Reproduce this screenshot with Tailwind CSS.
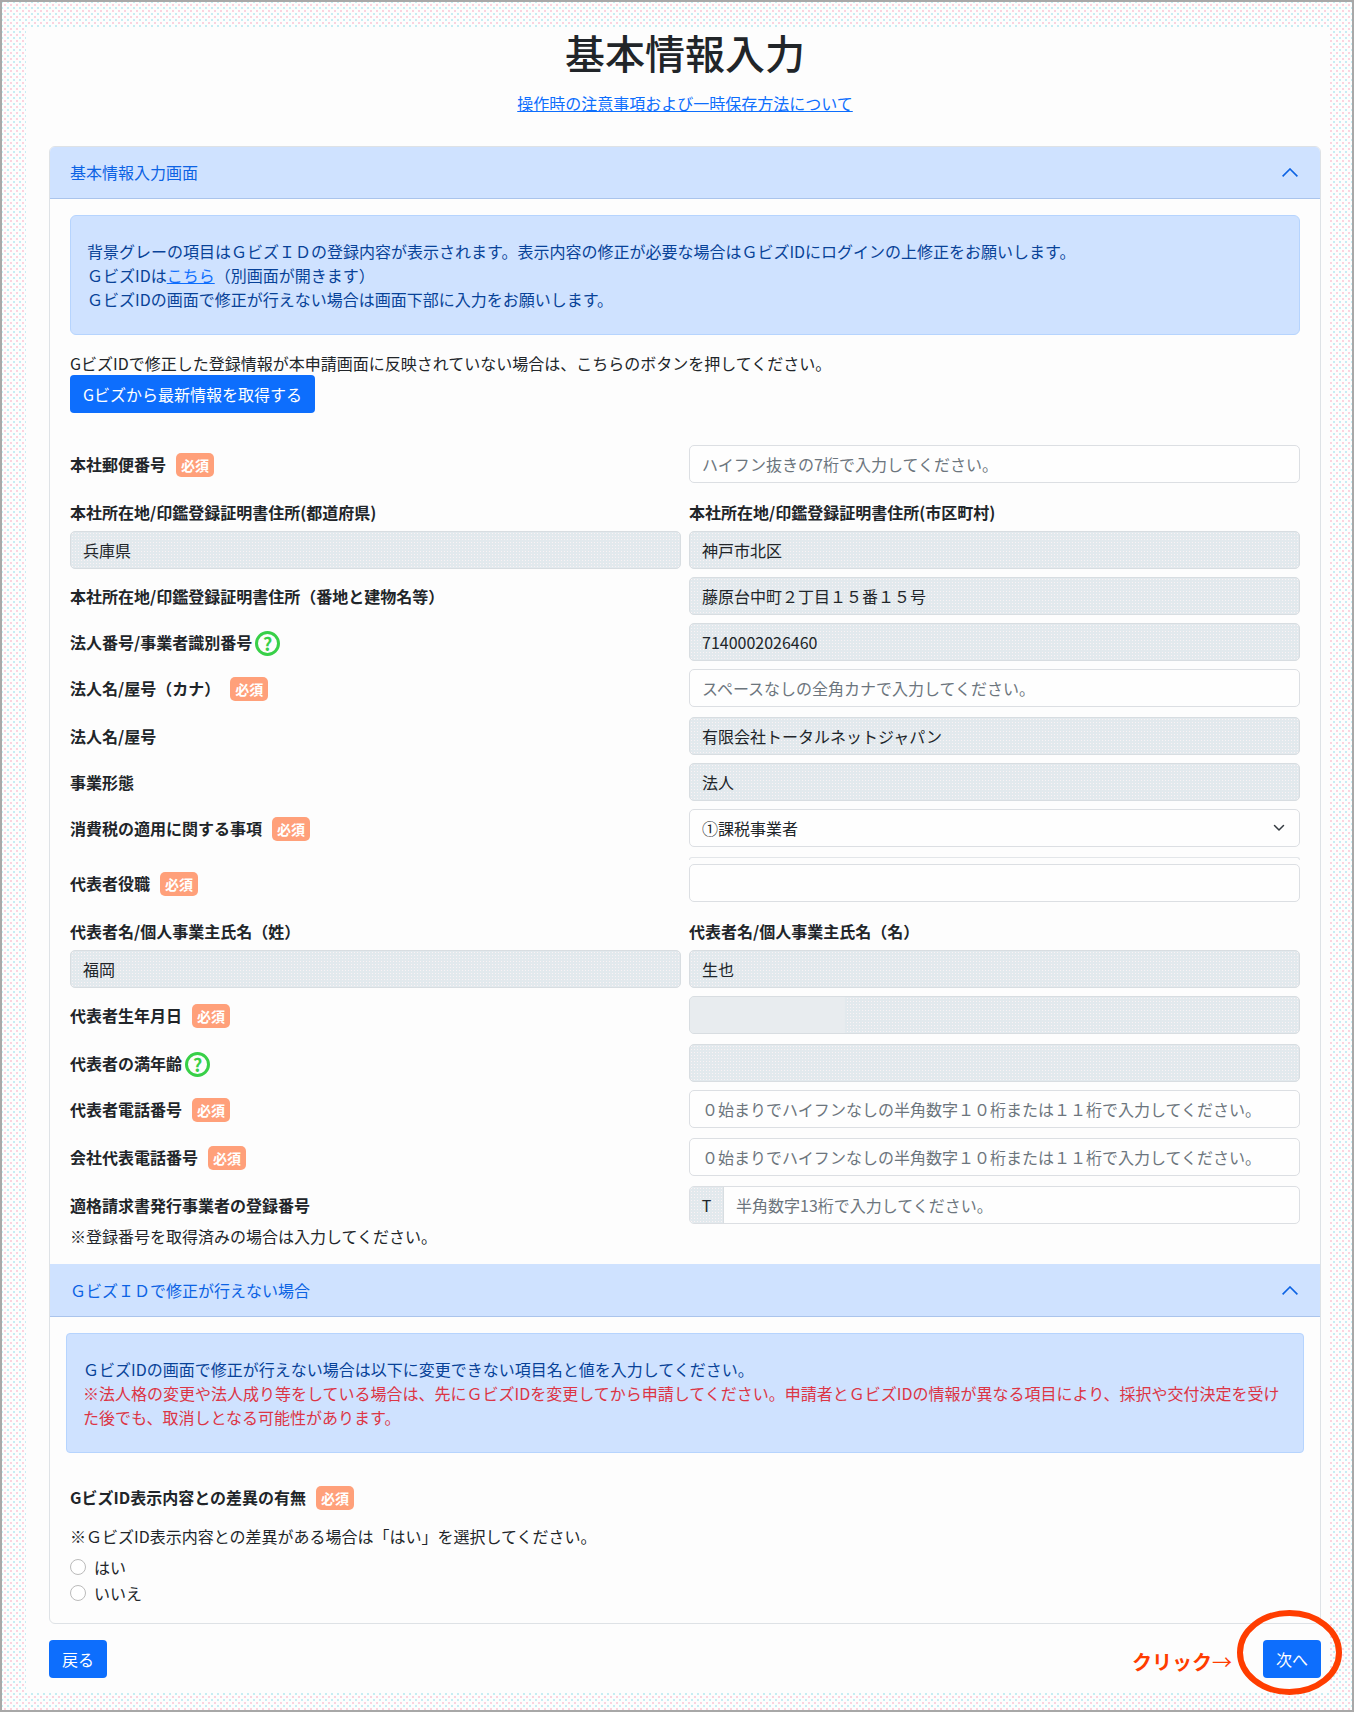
<!DOCTYPE html>
<html lang="ja">
<head>
  <meta charset="UTF-8" />
  <title>基本情報入力</title>
  <script src="https://cdn.jsdelivr.net/npm/@tailwindcss/browser@4"></script>
</head>
<body class="font-['Noto_Sans_CJK_JP','Noto_Sans',sans-serif] text-[16px] leading-[24px] text-[#212529]">
  <div class="relative w-[1354px] h-[1712px] overflow-hidden border-2 border-[#a8a8a8] bg-[#fdfdfd] bg-[image:radial-gradient(circle,#fbd3df_0.8px,transparent_0.9px),radial-gradient(circle,#c6edf3_0.8px,transparent_0.9px)] bg-size-[6px_6px] bg-position-[0_0,3px_3px] pt-[25px] pl-[24px] pr-[22px] pb-[18px]">
    <div class="h-full bg-[#fdfdfd] pl-[23px] pr-[9px] pt-[1px]">

      <!-- Title -->
      <h1 class="text-center text-[40px] leading-[48px] font-medium">基本情報入力</h1>
      <p class="mt-[15px] text-center"><a href="#" class="text-[#0d6efd] underline">操作時の注意事項および一時保存方法について</a></p>

      <!-- Card -->
      <div class="mt-[31px] border border-[#dee2e6] rounded-[6px] overflow-hidden">

        <div class="flex items-center justify-between h-[52px] pl-[20px] pr-[22px] bg-[#cfe2ff] border-b border-[#aac4ec] text-[#0c63e4]">
          <span class="-mt-[2px]">基本情報入力画面</span>
          <svg class="w-[16px] h-[9px]" viewBox="0 0 16 9" fill="none" stroke="#0c63e4" stroke-width="1.6"><path d="M0.6 8.4 8 1l7.4 7.4" /></svg>
        </div>

        <div class="px-[20px] pt-[16px]">
          <div class="h-[120px] pt-[23px] px-[16px] bg-[#cfe2ff] border border-[#b6d4fe] rounded-[6px] text-[#084298]">
            <p>背景グレーの項目はＧビズＩＤの登録内容が表示されます。表示内容の修正が必要な場合はＧビズIDにログインの上修正をお願いします。</p>
            <p>ＧビズIDは<a href="#" class="text-[#0d6efd] underline">こちら</a>（別画面が開きます）</p>
            <p>ＧビズIDの画面で修正が行えない場合は画面下部に入力をお願いします。</p>
          </div>

          <p class="mt-[16px]">GビズIDで修正した登録情報が本申請画面に反映されていない場合は、こちらのボタンを押してください。</p>
          <button class="block w-[245px] h-[38px] rounded-[4px] bg-[#0d6efd] text-white">Gビズから最新情報を取得する</button>

          <!-- Form rows -->
          <div class="mt-[32px] grid grid-cols-2 gap-x-[8px]">
            <div class="flex items-center gap-[10px] font-bold">本社郵便番号<span class="mt-[2px] flex items-center justify-center w-[38px] h-[24px] rounded-[5px] bg-[#ffa07a] text-white text-[14px]">必須</span></div>
            <input class="w-full h-[38px] px-[12px] border border-[#dcdfe3] rounded-[5px] bg-[#fefefe] placeholder:text-[#6c757d]" placeholder="ハイフン抜きの7桁で入力してください。" />
          </div>

          <div class="mt-[17px] grid grid-cols-2 gap-x-[8px]">
            <div>
              <label class="block font-bold mb-[7px]">本社所在地/印鑑登録証明書住所(都道府県)</label>
              <input readonly value="兵庫県" class="w-full h-[38px] px-[12px] border border-[#d8dde1] rounded-[5px] bg-[#e2e9ed] bg-[image:radial-gradient(circle,#faf3f5_0.6px,transparent_0.7px)] bg-size-[3px_3px]" />
            </div>
            <div>
              <label class="block font-bold mb-[7px]">本社所在地/印鑑登録証明書住所(市区町村)</label>
              <input readonly value="神戸市北区" class="w-full h-[38px] px-[12px] border border-[#d8dde1] rounded-[5px] bg-[#e2e9ed] bg-[image:radial-gradient(circle,#faf3f5_0.6px,transparent_0.7px)] bg-size-[3px_3px]" />
            </div>
          </div>

          <div class="mt-[8px] grid grid-cols-2 gap-x-[8px]">
            <div class="flex items-center font-bold">本社所在地/印鑑登録証明書住所（番地と建物名等）</div>
            <input readonly value="藤原台中町２丁目１５番１５号" class="w-full h-[38px] px-[12px] border border-[#d8dde1] rounded-[5px] bg-[#e2e9ed] bg-[image:radial-gradient(circle,#faf3f5_0.6px,transparent_0.7px)] bg-size-[3px_3px]" />
          </div>

          <div class="mt-[8px] grid grid-cols-2 gap-x-[8px]">
            <div class="flex items-center gap-[3px] font-bold">法人番号/事業者識別番号<span class="mt-[2px] flex items-center justify-center w-[25px] h-[25px] rounded-full border-[3px] border-[#38d048] text-[#38d048] text-[18px] leading-none">?</span></div>
            <input readonly value="7140002026460" class="w-full h-[38px] px-[12px] border border-[#d8dde1] rounded-[5px] bg-[#e2e9ed] bg-[image:radial-gradient(circle,#faf3f5_0.6px,transparent_0.7px)] bg-size-[3px_3px]" />
          </div>

          <div class="mt-[8px] grid grid-cols-2 gap-x-[8px]">
            <div class="flex items-center gap-[10px] font-bold">法人名/屋号（カナ）<span class="mt-[2px] flex items-center justify-center w-[38px] h-[24px] rounded-[5px] bg-[#ffa07a] text-white text-[14px]">必須</span></div>
            <input class="w-full h-[38px] px-[12px] border border-[#dcdfe3] rounded-[5px] bg-[#fefefe] placeholder:text-[#6c757d]" placeholder="スペースなしの全角カナで入力してください。" />
          </div>

          <div class="mt-[10px] grid grid-cols-2 gap-x-[8px]">
            <div class="flex items-center font-bold">法人名/屋号</div>
            <input readonly value="有限会社トータルネットジャパン" class="w-full h-[38px] px-[12px] border border-[#d8dde1] rounded-[5px] bg-[#e2e9ed] bg-[image:radial-gradient(circle,#faf3f5_0.6px,transparent_0.7px)] bg-size-[3px_3px]" />
          </div>

          <div class="mt-[8px] grid grid-cols-2 gap-x-[8px]">
            <div class="flex items-center font-bold">事業形態</div>
            <input readonly value="法人" class="w-full h-[38px] px-[12px] border border-[#d8dde1] rounded-[5px] bg-[#e2e9ed] bg-[image:radial-gradient(circle,#faf3f5_0.6px,transparent_0.7px)] bg-size-[3px_3px]" />
          </div>

          <div class="mt-[8px] grid grid-cols-2 gap-x-[8px]">
            <div class="flex items-center gap-[10px] font-bold">消費税の適用に関する事項<span class="mt-[2px] flex items-center justify-center w-[38px] h-[24px] rounded-[5px] bg-[#ffa07a] text-white text-[14px]">必須</span></div>
            <div class="relative">
              <select class="w-full h-[38px] px-[12px] border border-[#dcdfe3] rounded-[5px] bg-[#fefefe] appearance-none"><option>①課税事業者</option></select>
              <svg class="absolute right-[13px] top-[11px] w-[16px] h-[16px]" viewBox="0 0 16 16" fill="none" stroke="#343a40" stroke-width="1.5" stroke-linecap="round" stroke-linejoin="round"><path d="M3.5 5.5 8 10l4.5-4.5" /></svg>
            </div>
          </div>

          <div class="mt-[10px] grid grid-cols-2 gap-x-[8px]">
            <div class="flex items-center self-end h-[38px] gap-[10px] font-bold">代表者役職<span class="mt-[2px] flex items-center justify-center w-[38px] h-[24px] rounded-[5px] bg-[#ffa07a] text-white text-[14px]">必須</span></div>
            <div>
              <div class="h-[3px] mb-[4px] border-t border-x border-[#e3e6e9] rounded-t-[5px]"></div>
              <input class="w-full h-[38px] px-[12px] border border-[#dcdfe3] rounded-[5px] bg-[#fefefe]" />
            </div>
          </div>

          <div class="mt-[17px] grid grid-cols-2 gap-x-[8px]">
            <div>
              <label class="block font-bold mb-[7px]">代表者名/個人事業主氏名（姓）</label>
              <input readonly value="福岡" class="w-full h-[38px] px-[12px] border border-[#d8dde1] rounded-[5px] bg-[#e2e9ed] bg-[image:radial-gradient(circle,#faf3f5_0.6px,transparent_0.7px)] bg-size-[3px_3px]" />
            </div>
            <div>
              <label class="block font-bold mb-[7px]">代表者名/個人事業主氏名（名）</label>
              <input readonly value="生也" class="w-full h-[38px] px-[12px] border border-[#d8dde1] rounded-[5px] bg-[#e2e9ed] bg-[image:radial-gradient(circle,#faf3f5_0.6px,transparent_0.7px)] bg-size-[3px_3px]" />
            </div>
          </div>

          <div class="mt-[8px] grid grid-cols-2 gap-x-[8px]">
            <div class="flex items-center gap-[10px] font-bold">代表者生年月日<span class="mt-[2px] flex items-center justify-center w-[38px] h-[24px] rounded-[5px] bg-[#ffa07a] text-white text-[14px]">必須</span></div>
            <div class="h-[38px] border border-[#d8dde1] rounded-[5px] overflow-hidden bg-[#e2e9ed] bg-[image:radial-gradient(circle,#faf3f5_0.6px,transparent_0.7px)] bg-size-[3px_3px]"><div class="w-[155px] h-full bg-[#e8ecef]"></div></div>
          </div>

          <div class="mt-[10px] grid grid-cols-2 gap-x-[8px]">
            <div class="flex items-center gap-[3px] font-bold">代表者の満年齢<span class="mt-[2px] flex items-center justify-center w-[25px] h-[25px] rounded-full border-[3px] border-[#38d048] text-[#38d048] text-[18px] leading-none">?</span></div>
            <input readonly class="w-full h-[38px] px-[12px] border border-[#d8dde1] rounded-[5px] bg-[#e2e9ed] bg-[image:radial-gradient(circle,#faf3f5_0.6px,transparent_0.7px)] bg-size-[3px_3px]" />
          </div>

          <div class="mt-[8px] grid grid-cols-2 gap-x-[8px]">
            <div class="flex items-center gap-[10px] font-bold">代表者電話番号<span class="mt-[2px] flex items-center justify-center w-[38px] h-[24px] rounded-[5px] bg-[#ffa07a] text-white text-[14px]">必須</span></div>
            <input class="w-full h-[38px] px-[12px] border border-[#dcdfe3] rounded-[5px] bg-[#fefefe] placeholder:text-[#6c757d]" placeholder="０始まりでハイフンなしの半角数字１０桁または１１桁で入力してください。" />
          </div>

          <div class="mt-[10px] grid grid-cols-2 gap-x-[8px]">
            <div class="flex items-center gap-[10px] font-bold">会社代表電話番号<span class="mt-[2px] flex items-center justify-center w-[38px] h-[24px] rounded-[5px] bg-[#ffa07a] text-white text-[14px]">必須</span></div>
            <input class="w-full h-[38px] px-[12px] border border-[#dcdfe3] rounded-[5px] bg-[#fefefe] placeholder:text-[#6c757d]" placeholder="０始まりでハイフンなしの半角数字１０桁または１１桁で入力してください。" />
          </div>

          <div class="mt-[10px] grid grid-cols-2 gap-x-[8px]">
            <div class="flex items-center font-bold">適格請求書発行事業者の登録番号</div>
            <div class="flex h-[38px] border border-[#dcdfe3] rounded-[5px] overflow-hidden bg-[#fefefe]">
              <span class="flex items-center justify-center w-[34px] border-r border-[#d8dde1] bg-[#e2e9ed] bg-[image:radial-gradient(circle,#faf3f5_0.6px,transparent_0.7px)] bg-size-[3px_3px]">T</span>
              <input class="flex-1 px-[12px] placeholder:text-[#6c757d]" placeholder="半角数字13桁で入力してください。" />
            </div>
          </div>

          <p>※登録番号を取得済みの場合は入力してください。</p>
        </div>

        <div class="mt-[16px] flex items-center justify-between h-[53px] pl-[20px] pr-[22px] bg-[#cfe2ff] border-b border-[#aac4ec] text-[#0c63e4]">
          <span>ＧビズＩＤで修正が行えない場合</span>
          <svg class="w-[16px] h-[9px]" viewBox="0 0 16 9" fill="none" stroke="#0c63e4" stroke-width="1.6"><path d="M0.6 8.4 8 1l7.4 7.4" /></svg>
        </div>

        <div class="px-[20px] pt-[16px] h-[306px]">
          <div class="-mx-[4px] h-[120px] pt-[23px] px-[16px] bg-[#cfe2ff] border border-[#b6d4fe] rounded-[4px] text-[#084298]">
            <p>ＧビズIDの画面で修正が行えない場合は以下に変更できない項目名と値を入力してください。</p>
            <p class="text-[#dc3545]">※法人格の変更や法人成り等をしている場合は、先にＧビズIDを変更してから申請してください。申請者とＧビズIDの情報が異なる項目により、採択や交付決定を受けた後でも、取消しとなる可能性があります。</p>
          </div>

          <div class="mt-[31px] flex items-center gap-[10px] font-bold">GビズID表示内容との差異の有無<span class="mt-[2px] flex items-center justify-center w-[38px] h-[24px] rounded-[5px] bg-[#ffa07a] text-white text-[14px]">必須</span></div>
          <p class="mt-[14px]">※ＧビズID表示内容との差異がある場合は「はい」を選択してください。</p>
          <label class="mt-[6px] flex items-center h-[26px] gap-[8px]"><input type="radio" name="diff" class="w-[16px] h-[16px] appearance-none rounded-full border border-[#bbbbbb] bg-white" />はい</label>
          <label class="flex items-center h-[26px] gap-[8px]"><input type="radio" name="diff" class="w-[16px] h-[16px] appearance-none rounded-full border border-[#bbbbbb] bg-white" />いいえ</label>
        </div>
      </div>

      <!-- Footer buttons -->
      <div class="mt-[16px] flex items-center justify-between">
        <button class="w-[58px] h-[38px] rounded-[4px] bg-[#0d6efd] text-white">戻る</button>
        <div class="flex items-center gap-[31px]">
          <span class="mt-[6px] text-[20px] leading-[28px] font-bold text-[#ff3d00]">クリック<span class="font-normal">→</span></span>
          <button class="w-[58px] h-[38px] rounded-[4px] bg-[#0d6efd] text-white">次へ</button>
        </div>
      </div>
    </div>

    <!-- Red circle over the next button -->
    <svg class="absolute left-[1235px] top-[1608px] w-[105px] h-[85px]" viewBox="0 0 105 85" fill="none" stroke="#ff3d00" stroke-width="6"><ellipse cx="52.5" cy="42.5" rx="49.5" ry="39.5" /></svg>
  </div>
</body>
</html>
